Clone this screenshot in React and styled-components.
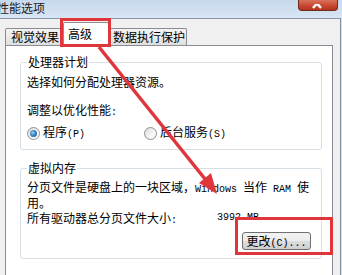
import * as React from 'react'
import styled, { createGlobalStyle } from 'styled-components'

const GlobalStyle = createGlobalStyle`
  html, body {
    margin: 0;
    padding: 0;
    background: #f0f0f0;
  }
  body {
    width: 342px;
    height: 275px;
    overflow: hidden;
    font-family: "Noto Sans CJK SC", "Noto Sans", sans-serif;
    font-size: 12px;
    color: #000;
  }
`

const Window = styled.div`
  position: relative;
  width: 342px;
  height: 275px;
  overflow: hidden;
  display: flex;
  flex-direction: column;
  background: #d6e4f2;
`

const TitleBar = styled.div`
  flex: none;
  height: 18px;
  display: flex;
  justify-content: space-between;
  align-items: flex-start;
  background: linear-gradient(to bottom, #c6d9ed 0%, #d8e5f3 100%);
`

const Title = styled.div`
  margin-left: -3px;
  margin-top: 1px;
  line-height: 14px;
  color: #1a1a1a;
`

const CloseButton = styled.div`
  width: 40px;
  height: 11px;
  margin-right: 4px;
  box-sizing: border-box;
  border: 1px solid #6d2a1d;
  border-top: none;
  border-radius: 0 0 4px 4px;
  background: linear-gradient(to bottom, #d9725c 0%, #c7452f 60%, #b5341f 100%);
  display: flex;
  justify-content: center;
  align-items: flex-end;
  overflow: hidden;
`

const Client = styled.div`
  flex: 1;
  width: 341px;
  box-sizing: border-box;
  display: flex;
  flex-direction: column;
  padding: 3px 7px 0 5px;
  border-top: 1px solid #8798ad;
  border-right: 1px solid #7f8fa3;
  background: #f0f0f0;
`

const TabStrip = styled.div`
  flex: none;
  height: 23px;
  display: flex;
  align-items: flex-end;
`

const Tab = styled.div`
  position: relative;
  box-sizing: border-box;
  width: ${(p) => p.$w}px;
  height: ${(p) => (p.$active ? 24 : 17)}px;
  margin: 0 ${(p) => (p.$active ? -2 : 0)}px ${(p) => (p.$active ? -1 : 0)}px;
  padding-left: ${(p) => p.$pl}px;
  z-index: ${(p) => (p.$active ? 2 : 1)};
  border: 1px solid #898c95;
  border-bottom: none;
  border-radius: 2px 2px 0 0;
  background: ${(p) =>
    p.$active ? '#fff' : 'linear-gradient(to bottom, #f3f3f3 0%, #ebebeb 50%, #dedede 100%)'};
  line-height: ${(p) => (p.$active ? 22 : 16)}px;
  white-space: nowrap;
`

const Panel = styled.div`
  flex: 1;
  padding: 8px 10px 0 14px;
  border: 1px solid #898c95;
  border-bottom: none;
  background: #fff;
`

const Group = styled.fieldset`
  margin: 0 0 ${(p) => p.$gap}px;
  padding: 4px 6px 8px;
  min-width: 0;
  border: 1px solid #d5dfe5;
  border-radius: 3px;
`

const Legend = styled.legend`
  padding: 0 1px;
  line-height: 16px;
`

const Line = styled.div`
  margin-top: ${(p) => p.$mt || 0}px;
  line-height: ${(p) => p.$lh || 16}px;
  white-space: nowrap;
`

const Latin = styled.span`
  font-family: "Liberation Mono", monospace;
  font-size: 10px;
  white-space: pre;
`

const RadioRow = styled.div`
  margin-top: 4px;
  height: 16px;
  display: flex;
`

const Option = styled.label`
  width: ${(p) => (p.$w ? `${p.$w}px` : 'auto')};
  display: flex;
  align-items: center;
  gap: 3px;
  line-height: 16px;
`

const Radio = styled.span`
  width: 13px;
  height: 13px;
  box-sizing: border-box;
  border-radius: 50%;
  border: 1px solid #8f8f8f;
  background: linear-gradient(135deg, #dcdcdc 0%, #f6f6f6 60%, #ffffff 100%);
  display: flex;
  align-items: center;
  justify-content: center;

  &::after {
    content: '';
    width: 7px;
    height: 7px;
    border-radius: 50%;
    display: ${(p) => (p.$checked ? 'block' : 'none')};
    background: radial-gradient(circle at 40% 40%, #9fd3f3 0%, #3b86c4 45%, #16456f 100%);
  }
`

const SizeRow = styled.div`
  margin-top: 2px;
  display: grid;
  grid-template-columns: 190px auto;
  line-height: 13px;
`

const ButtonRow = styled.div`
  margin-top: 5px;
  display: flex;
  justify-content: flex-end;
  padding-right: 4px;
`

const Button = styled.button`
  width: 69px;
  height: 18px;
  padding: 0;
  border: 1px solid #707070;
  border-radius: 3px;
  background: linear-gradient(to bottom, #f2f2f2 0%, #ebebeb 50%, #dddddd 51%, #cfcfcf 100%);
  font-family: inherit;
  font-size: 12px;
  line-height: 16px;
  color: #000;
`

const Highlight = styled.div`
  position: absolute;
  left: ${(p) => p.$x}px;
  top: ${(p) => p.$y}px;
  width: ${(p) => p.$w}px;
  height: ${(p) => p.$h}px;
  box-sizing: border-box;
  border: 3px solid #e0353b;
  z-index: 5;
  pointer-events: none;
`

const Overlay = styled.svg`
  position: absolute;
  left: 0;
  top: 0;
  z-index: 6;
  pointer-events: none;
`

export default function App() {
  return (
    <>
      <GlobalStyle />
      <Window>
        <TitleBar>
          <Title>性能选项</Title>
          <CloseButton>
            <svg width="12" height="6" viewBox="0 0 12 6">
              <path d="M1 -5 L9 4 M9 -5 L1 4" stroke="#fff" strokeWidth="2.4" />
            </svg>
          </CloseButton>
        </TitleBar>
        <Client>
          <TabStrip>
            <Tab $w={60} $pl={5}>视觉效果</Tab>
            <Tab $w={46} $pl={4} $active>高级</Tab>
            <Tab $w={80} $pl={5}>数据执行保护</Tab>
          </TabStrip>
          <Panel>
            <Group $gap={10}>
              <Legend>处理器计划</Legend>
              <Line>选择如何分配处理器资源。</Line>
              <Line $mt={12}>
                调整以优化性能<Latin>:</Latin>
              </Line>
              <RadioRow>
                <Option $w={117}>
                  <Radio $checked />
                  <span>
                    程序<Latin>(P)</Latin>
                  </span>
                </Option>
                <Option>
                  <Radio />
                  <span>
                    后台服务<Latin>(S)</Latin>
                  </span>
                </Option>
              </RadioRow>
            </Group>
            <Group $gap={0}>
              <Legend>虚拟内存</Legend>
              <Line $lh={13}>
                分页文件是硬盘上的一块区域，<Latin>Windows </Latin>当作<Latin> RAM </Latin>使
              </Line>
              <Line $lh={13}>用。</Line>
              <SizeRow>
                <span>
                  所有驱动器总分页文件大小<Latin>:</Latin>
                </span>
                <Latin>3992 MB</Latin>
              </SizeRow>
              <ButtonRow>
                <Button>
                  更改<Latin>(C)...</Latin>
                </Button>
              </ButtonRow>
            </Group>
          </Panel>
        </Client>
        <Highlight $x={60} $y={18} $w={51} $h={29} />
        <Highlight $x={235} $y={217} $w={98} $h={38} />
        <Overlay width="342" height="275" viewBox="0 0 342 275">
          <line x1="99" y1="47" x2="205" y2="179" stroke="#e0353b" strokeWidth="3.5" />
          <polygon points="217,194 199,183 211,173" fill="#e0353b" />
        </Overlay>
      </Window>
    </>
  )
}
